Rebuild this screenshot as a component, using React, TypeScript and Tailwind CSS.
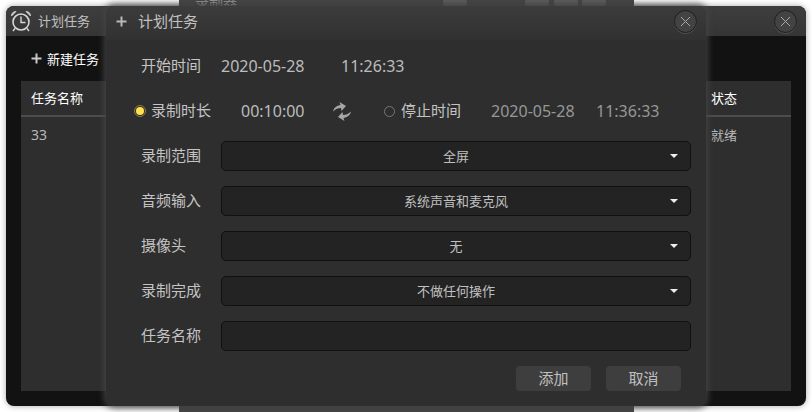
const font = { fontFamily: '"Noto Sans CJK SC", "Noto Sans", sans-serif' };
const digits = { fontFamily: '"Noto Sans", "Noto Sans CJK SC", sans-serif' };

function CloseBtn() {
  return (
    <button className="w-[23px] h-[23px] rounded-full bg-[#434343] border border-[#1f1f1f] flex items-center justify-center shadow-[0_1px_0_#4a4a4a]">
      <svg width="11" height="11" viewBox="0 0 11 11" fill="none" stroke="#a8a8a8" strokeWidth="1">
        <path d="M1 1 L10 10 M10 1 L1 10" />
      </svg>
    </button>
  );
}

function Plus({ color, size = 11 }: { color: string; size?: number }) {
  return (
    <svg width={size} height={size} viewBox="0 0 11 11" fill={color}>
      <rect x="4.5" y="0.5" width="2" height="10" />
      <rect x="0.5" y="4.5" width="10" height="2" />
    </svg>
  );
}

function Alarm() {
  return (
    <svg width="22" height="22" viewBox="0 0 22 22" fill="none" stroke="#d8d8d8">
      <circle cx="11" cy="12" r="8" strokeWidth="1.6" />
      <path d="M11 6.5 V12.5 H15.5" strokeWidth="1.4" />
      <path d="M1.5 6 C1.5 3 3.5 1.5 6 1.5 Z" fill="#d8d8d8" strokeWidth="0.8" />
      <path d="M20.5 6 C20.5 3 18.5 1.5 16 1.5 Z" fill="#d8d8d8" strokeWidth="0.8" />
      <path d="M5 18.5 L3 21 M17 18.5 L19 21" strokeWidth="1.4" />
    </svg>
  );
}

function Swap() {
  return (
    <svg width="18" height="20" viewBox="0 0 18 20" fill="#a6a6a6" className="block">
      <path d="M0 10.5 C1 6.5 4 4.5 7.5 4 L6.5 1 L13 5 L8.5 10 L8 7 C5 7 2.5 8 0 10.5 Z" />
      <path d="M18 10.5 C17 14.5 14 16.5 10.5 17 L11.5 20 L5 16 L9.5 11 L10 14 C13 14 15.5 13 18 10.5 Z" />
    </svg>
  );
}

function Label({ children }: { children: string }) {
  return <span className="w-[80px] shrink-0 text-[15px] leading-[20px] -mt-[2px] text-[#c4c4c4]">{children}</span>;
}

function SelectRow({ label, value }: { label: string; value: string }) {
  return (
    <div className="flex items-center h-[30px]">
      <Label>{label}</Label>
      <div className="relative flex-1 h-full rounded-[5px] bg-[#232323] border border-[#101010] flex items-center justify-center text-[13px] text-[#c0c0c0]">
        {value}
        <span className="absolute right-[12px] top-[12px] w-0 h-0 border-x-[4px] border-x-transparent border-t-[4px] border-t-[#eeeeee]" />
      </div>
    </div>
  );
}

export default function App() {
  return (
    <div className="relative w-[812px] h-[412px] overflow-hidden bg-white" style={font}>
      {/* window behind everything */}
      <div className="absolute left-[179px] top-0 w-[455px] h-[412px] bg-[#454545] overflow-hidden">
        <span className="absolute left-[16px] top-[-9px] text-[14px] text-[#9a9a9a]">录制器</span>
        <span className="absolute left-[264px] top-[-9px] w-[24px] h-[24px] rounded-full bg-[#5e5e5e]" />
        <span className="absolute left-[346px] top-[-9px] w-[24px] h-[24px] rounded-full bg-[#5e5e5e]" />
        <span className="absolute left-[375px] top-[-9px] w-[24px] h-[24px] rounded-full bg-[#5e5e5e]" />
        <span className="absolute left-[403px] top-[-9px] w-[24px] h-[24px] rounded-full bg-[#5e5e5e]" />
      </div>

      {/* main window */}
      <div className="absolute left-[6px] top-[6px] w-[800px] h-[400px] rounded-[8px] overflow-hidden bg-[#121212] flex flex-col shadow-[0_0_6px_rgba(0,0,0,0.35)]">
        <div className="h-[30px] shrink-0 flex items-center justify-between pl-[4px] pr-[9px] bg-gradient-to-b from-[#3e3e3e] to-[#353535]">
          <div className="flex items-center gap-[6px]">
            <Alarm />
            <span className="text-[13px] text-[#c0c0c0]">计划任务</span>
          </div>
          <CloseBtn />
        </div>
        <div className="h-[45px] shrink-0 flex items-center gap-[5px] pl-[25px] text-[13px] text-white">
          <Plus color="#c8c8c8" />
          <span>新建任务</span>
        </div>
        <div className="mx-[15px] flex-1 bg-[#2e2e2e] flex flex-col text-[13px]">
          <div className="h-[36px] shrink-0 flex items-center justify-between px-[10px] border-b-2 border-[#4d4d4d] text-white">
            <span>任务名称</span>
            <span className="w-[70px]">状态</span>
          </div>
          <div className="h-[36px] flex items-center justify-between px-[10px] text-[#b8b8b8]">
            <span style={digits} className="text-[14px] -mt-[1px]">33</span>
            <span className="w-[70px]">就绪</span>
          </div>
        </div>
        <div className="h-[15px] shrink-0" />
      </div>

      {/* dialog */}
      <div className="absolute left-[106px] top-[6px] w-[600px] h-[400px] rounded-[8px] overflow-hidden bg-[#2e2e2e] flex flex-col shadow-[0_0_6px_2px_rgba(70,70,70,0.9)]">
        <div className="h-[34px] shrink-0 flex items-center justify-between pl-[10px] pr-[9px] pb-[3px] bg-gradient-to-b from-[#3c3c3c] to-[#313131]">
          <div className="flex items-center gap-[11px]">
            <Plus color="#b8b8b8" />
            <span className="text-[15px] text-[#c0c0c0]">计划任务</span>
          </div>
          <CloseBtn />
        </div>
        <div className="flex-1 flex flex-col pl-[35px] pr-[15px]">
          <div className="flex items-center h-[24px] mt-[14px] text-[15px]">
            <Label>开始时间</Label>
            <span style={digits} className="w-[120px] text-[16px] leading-[20px] text-[#bcbcbc]">2020-05-28</span>
            <span style={digits} className="text-[16px] leading-[20px] text-[#bcbcbc]">11:26:33</span>
          </div>
          <div className="flex items-center h-[24px] mt-[21px] -ml-[7px]">
            <span className="w-[12px] h-[12px] rounded-full border border-[#8d7f3f] bg-[#2e2e2e] flex items-center justify-center">
              <span className="w-[8px] h-[8px] rounded-full bg-[#ffe14d]" />
            </span>
            <span className="ml-[5px] text-[15px] leading-[20px] -mt-[2px] text-[#c4c4c4]">录制时长</span>
            <span style={digits} className="ml-[30px] w-[62px] text-[16px] leading-[20px] text-[#bcbcbc]">00:10:00</span>
            <span className="ml-[30px]"><Swap /></span>
            <span className="ml-[33px] w-[11px] h-[11px] rounded-full border border-[#777777]" />
            <span className="ml-[6px] text-[15px] leading-[20px] -mt-[2px] text-[#c4c4c4]">停止时间</span>
            <span style={digits} className="ml-[30px] w-[84px] text-[16px] leading-[20px] text-[#979797]">2020-05-28</span>
            <span style={digits} className="ml-[21px] text-[16px] leading-[20px] text-[#979797]">11:36:33</span>
          </div>
          <div className="flex flex-col gap-[15px] mt-[18px]">
            <SelectRow label="录制范围" value="全屏" />
            <SelectRow label="音频输入" value="系统声音和麦克风" />
            <SelectRow label="摄像头" value="无" />
            <SelectRow label="录制完成" value="不做任何操作" />
            <div className="flex items-center h-[30px]">
              <Label>任务名称</Label>
              <div className="flex-1 h-full rounded-[5px] bg-[#232323] border border-[#101010]" />
            </div>
          </div>
          <div className="flex justify-end gap-[15px] mt-[15px] pr-[10px]">
            <button className="w-[75px] h-[25px] rounded-[4px] bg-[#3e3e3e] text-[15px] text-[#c0c0c0] flex items-center justify-center">添加</button>
            <button className="w-[75px] h-[25px] rounded-[4px] bg-[#3e3e3e] text-[15px] text-[#c0c0c0] flex items-center justify-center">取消</button>
          </div>
        </div>
      </div>
    </div>
  );
}
